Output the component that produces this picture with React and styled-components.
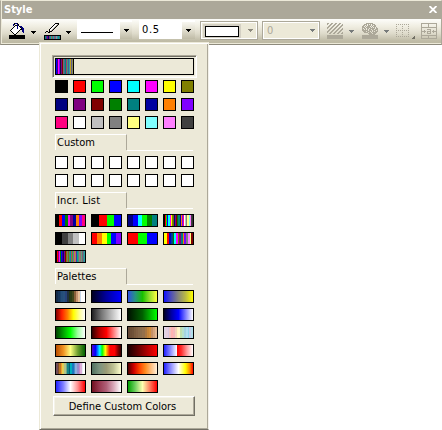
import React from 'react';
import styled, { createGlobalStyle } from 'styled-components';

const Global = createGlobalStyle`
  * { box-sizing: border-box; }
  html, body { margin: 0; background: #fff; overflow: hidden; }
  body { font-family: "DejaVu Sans Condensed", "DejaVu Sans", sans-serif; font-stretch: condensed; font-size: 11px; color: #000; }
`;
const Screen = styled.main`
  position: relative;
  width: 442px;
  height: 430px;
  overflow: hidden;
`;
const Window = styled.section`
  height: 45px;
  border: 1px solid;
  border-color: #ece9d8 #aca899 #8d8a7c #aca899;
  background: #ece9d8;
`;
const TitleBar = styled.header`
  height: 18px;
  margin-left: 1px;
  padding: 0 4px 0 2px;
  display: flex;
  justify-content: space-between;
  background: #aca899;
  color: #fff;
  font-weight: bold;
  line-height: 18px;
`;
const Close = styled.svg`
  width: 8px;
  height: 7px;
  margin-top: 5px;
`;
const Toolbar = styled.div`
  height: 24px;
  margin-left: 1px;
  display: flex;
  align-items: flex-start;
  background: linear-gradient(#fdfdfa 0%, #f0eee2 30%, #dedbcb 60%, #c0bca7 90%, #bdb9a3 100%);
`;
const Glyph = styled.svg`
  display: block;
  flex: none;
  width: ${p => p.$w}px;
  height: ${p => p.$h}px;
  margin: ${p => p.$m || '0'};
  shape-rendering: crispEdges;
`;
const Combo = styled.div`
  display: flex;
  width: ${p => p.$w}px;
  height: 19px;
  margin: 1px 0 0 ${p => p.$gap}px;
  padding: ${p => p.$pad || '0'};
  background: #fff;
  flex: none;
`;
const ComboValue = styled.div`
  flex: 1;
  line-height: 20px;
  letter-spacing: 0.6px;
`;
const ComboButton = styled.div`
  width: ${p => p.$w || 13}px;
  height: 17px;
  margin-top: 2px;
  padding: 7px 0 0 4px;
  background: linear-gradient(#f8f7f1, #e2dfd0 45%, #bfbba6);
`;
const DisabledCombo = styled.div`
  display: flex;
  align-items: flex-start;
  width: 58px;
  height: 19px;
  margin: 2px 0 0 ${p => p.$gap}px;
  padding: 1px;
  border: 1px solid #aca899;
  box-shadow: inset 0 0 0 1px #fff;
  background: #ece9d8;
  color: #aca899;
  flex: none;
`;
const BoxSample = styled.div`
  width: 38px;
  height: 14px;
  margin: 1px 0 0 1px;
  padding: 2px;
  background: #d4d0c3;
  &::before {
    content: '';
    display: block;
    width: 32px;
    height: 9px;
    border: 1px solid #000;
    background: #fff;
  }
`;
const DisabledValue = styled.span`
  width: 43px;
  padding-left: 3px;
  line-height: 15px;
`;
const Popup = styled.section`
  position: absolute;
  left: 39px;
  top: 42px;
  width: 170px;
  height: 388px;
  padding: 11px 0 0 12px;
  border: 1px solid;
  border-color: #ece9d8 #f4f2ea #716f64 #ece9d8;
  box-shadow: inset 1px 1px #fff, inset -1px -1px #aca899;
  background: #ece9d8;
`;
const Preview = styled.div`
  width: 145px;
  height: 23px;
  margin-top: 1px;
  padding: 1px;
  border: 1px solid;
  border-color: #aca899 #fff #fff #aca899;
  box-shadow: inset 1px 1px #716f64, inset -1px -1px #f8f6ee;
`;
const PreviewWell = styled.div`
  width: 139px;
  height: 17px;
  margin: 1px 0 0 1px;
  border: 1px solid #000;
`;
const PreviewStripes = styled.div`
  width: 18px;
  height: 15px;
  border-right: 1px solid #000;
  background: ${p => p.$fill};
`;
const Grid = styled.div`
  display: grid;
  grid-template-columns: repeat(${p => p.$cols}, max-content);
  gap: 5px;
  margin: ${p => p.$top}px 0 0 3px;
`;
const Swatch = styled.div`
  width: ${p => (p.$wide ? 31 : 13)}px;
  height: 13px;
  border: 1px solid #000;
  background: ${p => p.$fill};
`;
const Section = styled.div`
  display: flex;
  width: 138px;
  height: 17px;
  margin: ${p => p.$top}px 0 0 3px;
  &::after {
    content: '';
    flex: 1;
    border-bottom: 1px solid #fff;
  }
`;
const Tab = styled.h2`
  width: 72px;
  height: 16px;
  margin: 0;
  padding-left: 1px;
  border: 1px solid;
  border-width: 1px 1px 0 1px;
  border-color: #fff #aca899 transparent #fff;
  font-size: 11px;
  font-weight: normal;
  line-height: 15px;
  letter-spacing: ${p => p.$track || 0}px;
`;
const DefineButton = styled.button`
  display: block;
  width: 142px;
  height: 20px;
  margin: 3px 0 0 1px;
  padding: 0 3px 0 0;
  border: 1px solid;
  border-color: #fff #716f64 #716f64 #fff;
  box-shadow: inset -1px -1px #aca899, inset 1px 1px #f5f3e9;
  background: #ece9d8;
  color: #000;
  font: inherit;
  line-height: 17px;
`;

const stripes = s => {
  const c = s.split(' ');
  return `linear-gradient(90deg, ${c.map((v, i) => `#${v} ${(i * 100) / c.length}% ${((i + 1) * 100) / c.length}%`).join(', ')})`;
};
const blend = s => `linear-gradient(90deg, ${s.split(' ').map(v => `#${v}`).join(', ')})`;

const BASIC = '000 f00 0f0 00f 0ff f0f ff0 808000 000080 800080 800000 008000 008080 0000a0 ff8000 8000ff ff0080 fff c0c0c0 808080 ffff80 80ffff ff80ff 404040'.split(' ');
const LAST = '000 f00 808 f0f 080 00f 408 000080 808 800000 808000 777777 806020 30a060 0090a0 b05050 20c040 a040a0 a0a030 c06080 4040a0 00a0a0 40a070 a07080 907070 60a080 806070 408090 30a0a0';
const PREVIEW = '0000ff 400080 ff00ff 8000ff 101040 800080 800000 707070 407090 a05040 008080 a04070 40a070 4060a0 30a0a0 c0a020 606090 909050';
const INCR = [
  '000 ff0000 0000ff 008000 ff00ff 800080 0000a0 ff8000 8000ff ff0080',
  '000 ff0000 00ff00 0000ff',
  '000080 0000ff 00ffff 00ff00 008000 008080',
  '000 f00 0f0 00f 0ff f0f ff0 808000 707000 000080 800080 800000 008000 008080 0000a0 ff8000 8000ff ff0080 fff c0c0c0 808080 ffff80 80ffff ff80ff 404040 333',
  '000 404040 808080 c0c0c0 fff',
  'f00 ff8000 ff0 0f0 00f 8000ff',
  'f00 0f0 00f',
  'ff0 ff0 f00 0000c0 004090 008000 0ff f0f 808000 800080 008080 ff8000 8000ff 808080 ff80ff ffff80 800000',
  LAST,
];
const PALETTES = [
  stripes('142b48 16365a 1c426d 244d79 28507c 27427a 203040 233512 283b15 41451a 886039 c69470 e8c29a c9d9ea fff fff'),
  blend('000020 0000a0 0000ff'),
  blend('3050e0 269580 18c000 98e030 ffff40'),
  blend('1010ff 5050b8 888878 bbbb42 ffff00'),
  blend('800000 ff2000 ff8000 ffff00 ffff90 fff'),
  blend('202020 777 bbb fff'),
  blend('001000 006000 00ff00'),
  blend('000020 0000a0 0000ff 8080ff ffffff'),
  blend('004000 00a000 00ff00 a0ffa0 fff'),
  blend('300000 b00000 ff0000 ff8080 fff'),
  stripes('654936 6c4d35 705239 7b5b3e 826044 876849 8c6c4b 95704b aa7742 c48338 d18d3c c49067 d3a37c dfb794'),
  stripes('e0d4e5 e5cddf d7c8e2 efc4c4 ffb3b2 f4b8bc f4d2bd fff5ba fff5cc c1dfad b7e1cc a5d3e2 b1def0 8fd6ea c5cbe7 b1dfe9'),
  blend('b84d00 f09020 ffff80 70a030 006000'),
  'linear-gradient(90deg,#5000d0,#00f 12%,#0ff 27%,#0f0 35%,#ff0 46%,#f80 53%,#f00 62%,#f00 78%,#800000 90%,#300)',
  blend('180000 600000 b00000 ff0000'),
  'linear-gradient(90deg,#2020ff,#8080ff 20%,#fff 45%,#f00 46%,#ff3030 60%,#ffa0a0 80%,#fff)',
  stripes('704c58 7f4c25 b87525 f49b29 e0cf55 b0c48c 70a887 148487 005d76 00b0bd 1979bf 4e8cca 89b0de 968dcc c488c8 ddb1db eaf0f4 ffffff'),
  blend('507060 7b9480 9b9b76 c1c597 ffffcf'),
  blend('500000 d00000 ff4500 ff8c20 ffc080 fff0d8'),
  'linear-gradient(90deg,#2020ff,#8080ff 20%,#fff 50%,#ffff80 62%,#ffff00 74%,#ff9000 88%,#f00)',
  blend('2020ff 8080ff ffffff ff9090 ff0000'),
  blend('701020 983850 b06078 d9aaba fff'),
  blend('00a000 70d060 ffffb0 ff8060 ff0000'),
];

const INK = { k: '#000', b: '#000080', w: '#fff', g: '#aca899' };
const Bits = ({ rows, dx = 0 }) => rows.flatMap((row, y) => [...row].map((c, x) => INK[c]
  ? <rect key={`${x}-${y}`} x={x + dx} y={y} width="1" height="1" fill={INK[c]} /> : null));
const Arrow = ({ m, fill = '#000' }) => (
  <Glyph $w={5} $h={3} $m={m} fill={fill}>
    <rect width="5" height="1" /><rect x="1" y="1" width="3" height="1" /><rect x="2" y="2" width="1" height="1" />
  </Glyph>
);

const BUCKET = [
  '................',
  '.....kbbk.......',
  '....bk..bk......',
  '....b.kkbk......',
  '.....kwwbwkbb...',
  '....kwwwbwwkbb..',
  '...kwwwwbwwwkbb.',
  '..kwwwwwwwwkkbb.',
  '.kwwwwwwwwk..bb.',
  '..kwwwwwwk...bb.',
  '...kwwwwk.....b.',
  '....kwwk........',
  '.....kk.........',
];
const PEN = [
  '..........kkkk',
  '.........kwwgk',
  '........kwwgk.',
  '.......kwwgk..',
  '......kwwgk...',
  '.....kwwgk....',
  '....kwwgk.....',
  '....kwgk......',
  '.kk.kkk.......',
  'k..kk.........',
];
const SPONGE = [
  '....ggggggg.....',
  '..ggg.g.g.ggg...',
  '.gg.g.ggg.g.gg..',
  'gg.g.ggg.g.ggg..',
  'ggg.ggggg.g.g.g.',
  'g.gg.gg.ggggg.gg',
  'gg.g.g.gg.gg.ggg',
  'gggggg.ggg.ggg.g',
  '.ggg.ggg.g.g.ggg',
  '..gggg.gg.ggggg.',
  '......gggg.ggg..',
  '.......gggggg...',
];
const HATCH = Array.from({ length: 11 }, (_, y) => Array.from({ length: 16 }, (_, x) => ((x + y) % 4 < 2 ? 'g' : '.')).join(''));

export default function App() {
  return (
    <Screen>
      <Global />
      <Window>
        <TitleBar>
          <span>Style</span>
          <Close viewBox="0 0 8 7"><path d="M.5 0 7.5 7M7.5 0 .5 7" stroke="#fff" strokeWidth="1.9" /></Close>
        </TitleBar>
        <Toolbar>
          <Glyph $w={17} $h={17} $m="3px 0 0 7px">
            <Bits rows={BUCKET} />
            <rect y="13" width="16" height="4" />
          </Glyph>
          <Arrow m="12px 0 0 5px" />
          <Glyph $w={17} $h={17} $m="4px 0 0 8px">
            <Bits rows={PEN} dx={1} />
            <rect y="12" width="17" height="5" />
            {['#008080', '#404080', '#800080', '#000080', '#705060', '#00a0a0', '#a06060', '#408080', '#30a0a0', '#a05070', '#4080a0', '#9090a0', '#409090', '#00a0a0', '#408080'].map((c, i) => <rect key={i} x={i + 1} y="13" width="1" height="3" fill={c} />)}
          </Glyph>
          <Arrow m="12px 0 0 5px" />
          <Combo $w={55} $gap={6} $pad="0 0 0 4px">
            <ComboValue><Glyph $w={32} $h={1} $m="12px 0 0"><rect width="32" height="1" /></Glyph></ComboValue>
            <ComboButton $w={12}><Arrow m="0" /></ComboButton>
          </Combo>
          <Combo $w={56} $gap={7} $pad="0 0 0 3px">
            <ComboValue>0.5</ComboValue>
            <ComboButton><Arrow m="0" /></ComboButton>
          </Combo>
          <DisabledCombo $gap={5}><BoxSample /><Arrow fill="#8d8a7e" m="6px 0 0 7px" /></DisabledCombo>
          <DisabledCombo $gap={4}><DisabledValue>0</DisabledValue><Arrow fill="#777b7b" m="6px 0 0 3px" /></DisabledCombo>
          <Glyph $w={16} $h={16} $m="4px 0 0 7px">
            <Bits rows={HATCH} />
            <rect y="12" width="16" height="4" fill="#aca899" />
          </Glyph>
          <Arrow fill="#777b7b" m="11px 0 0 6px" />
          <Glyph $w={16} $h={16} $m="4px 0 0 8px">
            <Bits rows={SPONGE} />
            <rect y="12" width="16" height="4" fill="#aca899" />
          </Glyph>
          <Arrow fill="#777b7b" m="11px 0 0 6px" />
          <Glyph $w={19} $h={16} $m="5px 0 0 7px">
            <path d="M0 .5H13M0 6.5H13M0 12.5H13M.5 0V13M6.5 0V13M12.5 0V13" stroke="#aca899" strokeDasharray="1 1" />
            <path d="M19 11V15H15Z" fill="#716f64" />
          </Glyph>
          <Glyph $w={16} $h={16} $m="4px 0 0 6px">
            <path d="M.5.5H15.5V15.5H.5ZM0 4.5H16M0 12.5H16M7.5 0V4M7.5 12V16M1 8.5H5M11 8.5H15M3.5 7V10M12.5 7V10M6 6.5H9.5V10.5H6.5V8.5H9" fill="none" stroke="#aca899" />
          </Glyph>
        </Toolbar>
      </Window>
      <Popup>
        <Preview><PreviewWell><PreviewStripes $fill={stripes(PREVIEW)} /></PreviewWell></Preview>
        <Grid $cols={8} $top={2}>{BASIC.map(c => <Swatch key={c} $fill={`#${c}`} />)}</Grid>
        <Section $top={5}><Tab>Custom</Tab></Section>
        <Grid $cols={8} $top={5}>{Array.from({ length: 16 }, (_, i) => <Swatch key={i} $fill="#fff" />)}</Grid>
        <Section $top={5}><Tab $track={0.2}>Incr. List</Tab></Section>
        <Grid $cols={4} $top={5}>{INCR.map((c, i) => <Swatch key={i} $wide $fill={stripes(c)} />)}</Grid>
        <Section $top={5}><Tab>Palettes</Tab></Section>
        <Grid $cols={4} $top={5}>{PALETTES.map((c, i) => <Swatch key={i} $wide $fill={c} />)}</Grid>
        <DefineButton>Define Custom Colors</DefineButton>
      </Popup>
    </Screen>
  );
}
